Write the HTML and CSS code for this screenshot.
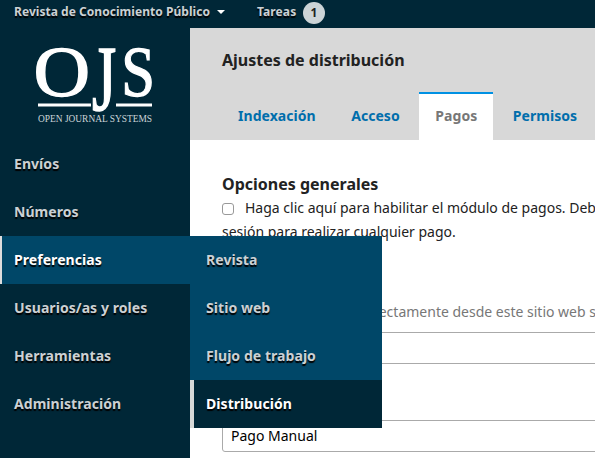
FILE: index.html
```html
<!DOCTYPE html>
<html lang="es">
<head>
<meta charset="utf-8">
<title>Ajustes de distribución</title>
<link rel="stylesheet" href="styles.css">
</head>
<body>
<header class="topbar">
  <span class="journal">Revista de Conocimiento Público</span><i class="caret"></i>
  <span class="tasks">Tareas</span><span class="badge">1</span>
</header>
<div class="layout">
  <aside class="sidebar">
    <svg class="logo" width="190" height="112" viewBox="0 28 190 112" role="img" aria-label="OJS">
      <g class="logo-letters">
        <text transform="translate(33.6 95.6) scale(1.06 .98)">O</text>
        <text transform="translate(92 109.5) scale(.84 1.25)">J</text>
        <text transform="translate(121.3 95.6) scale(.82 .98)">S</text>
      </g>
      <path fill="#fff" d="M38 103.5h53v3H38zM116 103.5h36v3h-36z"/>
      <text class="logo-name" x="38" y="121.5" textLength="114" lengthAdjust="spacingAndGlyphs">OPEN JOURNAL SYSTEMS</text>
    </svg>
    <nav class="menu">
      <a>Envíos</a>
      <a>Números</a>
      <div class="open">
        <a class="current">Preferencias</a>
        <div class="submenu">
          <a>Revista</a>
          <a>Sitio web</a>
          <a>Flujo de trabajo</a>
          <a class="selected">Distribución</a>
        </div>
      </div>
      <a>Usuarios/as y roles</a>
      <a>Herramientas</a>
      <a>Administración</a>
    </nav>
  </aside>
  <main class="content">
    <div class="heading">
      <h1>Ajustes de distribución</h1>
      <div class="tabs">
        <a>Indexación</a><a>Acceso</a><a class="active">Pagos</a><a>Permisos</a>
      </div>
    </div>
    <form class="form">
      <h2>Opciones generales</h2>
      <div class="option"><input type="checkbox"><span>Haga clic aquí para habilitar el módulo de pagos. Deberá iniciar</span></div>
      <div class="option">sesión para realizar cualquier pago.</div>
      <div class="hint">directamente desde este sitio web se</div>
      <div class="field"></div>
      <div class="field select">Pago Manual</div>
    </form>
  </main>
</div>
</body>
</html>
```
FILE: styles.css
```css
* { box-sizing: border-box; }
body {
  margin: 0;
  width: 595px;
  height: 458px;
  overflow: hidden;
  background: #fff;
  color: #222;
  font: 14px/24px "Noto Sans", sans-serif;
}
.topbar {
  display: flex;
  align-items: center;
  height: 28px;
  padding: 0 0 4px 14px;
  background: #002737;
  color: #ccd1d4;
  font-size: 12px;
  font-weight: 700;
  text-shadow: 0 2px 1px #000;
  white-space: nowrap;
}
.journal { width: 195px; letter-spacing: .04px; }
.caret {
  margin: 0 32px 0 8px;
  border: 4px solid transparent;
  border-top-color: #fff;
  border-bottom: 0;
}
.tasks { width: 41px; letter-spacing: .1px; }
.badge {
  width: 22px;
  height: 22px;
  margin: 2px 0 0 5px;
  border-radius: 50%;
  background: #ccd4d7;
  color: #222;
  line-height: 22px;
  text-align: center;
  text-shadow: none;
}
.layout { display: flex; height: 430px; }
.sidebar { flex: 0 0 190px; background: #002737; }
.logo { display: block; }
.logo-letters {
  fill: #fff;
  stroke: #fff;
  stroke-width: 1.3;
  font: 74px "Liberation Serif", serif;
}
.logo-name { fill: #ccd4d7; font: 9.5px "Liberation Serif", serif; }
.menu a {
  display: block;
  height: 48px;
  padding-left: 14px;
  color: #ccd1d4;
  font-weight: 700;
  line-height: 48px;
  letter-spacing: .06px;
  text-shadow: 0 2px 1px #000;
  white-space: nowrap;
}
.open { position: relative; }
.menu .current {
  padding-left: 12px;
  border-left: 2px solid #ddd;
  background: #004768;
  color: #fff;
}
.submenu {
  position: absolute;
  z-index: 2;
  top: 0;
  left: 190px;
  width: 192px;
  background: #004768;
}
.submenu a { padding-left: 16px; }
.menu .selected {
  padding-left: 12px;
  border-left: 4px solid #d6d8d7;
  background: #002737;
  color: #fff;
}
.content { flex: 1; min-width: 0; overflow: hidden; }
.heading { height: 112px; padding: 20px 0 0 32px; background: #d8d8d8; }
h1, h2 { margin: 0; font-size: 16px; font-weight: 700; line-height: 24px; }
.tabs { display: flex; gap: 3.6px; margin-top: 20px; }
.tabs a {
  height: 48px;
  padding: 0 16px;
  border-top: 2px solid transparent;
  color: #006eac;
  font-weight: 700;
  line-height: 44px;
  letter-spacing: .04px;
}
.tabs .active { border-top-color: #0091e3; background: #fff; color: #777; }
.form { padding: 32px 0 0 32px; white-space: nowrap; }
.option { display: flex; align-items: center; height: 24px; }
.option input {
  appearance: none;
  flex: none;
  width: 12px;
  height: 12px;
  margin: 2px 11px 0 0;
  border: 1px solid #999;
  border-radius: 3px;
  background: #fff;
}
.hint { margin-top: 56px; margin-left: 139px; color: #777; }
.field {
  width: 500px;
  height: 32px;
  margin-top: 8px;
  padding-left: 8px;
  border: 1px solid #aaa;
  border-radius: 3px;
  color: #000;
  line-height: 30px;
}
.select { margin-top: 56px; }
```
